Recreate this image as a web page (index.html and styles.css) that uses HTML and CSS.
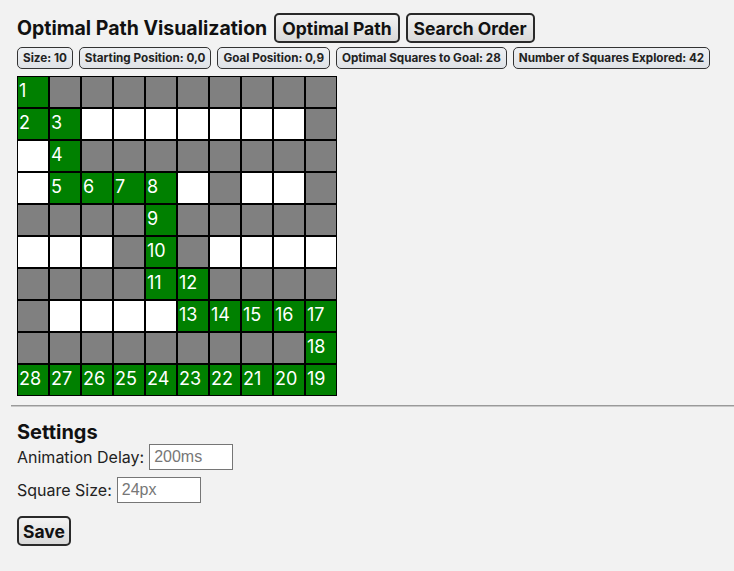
FILE: index.html
```html
<!DOCTYPE html>
<html>
<head>
<meta charset="utf-8">
<link rel="stylesheet" href="styles.css">
</head>
<body>
<div class="page">
  <section class="viz">
    <div class="title-row">
      <h1 class="title">Optimal Path Visualization</h1>
      <button class="btn">Optimal Path</button>
      <button class="btn">Search Order</button>
    </div>
    <div class="badges">
      <span class="badge">Size: 10</span>
      <span class="badge">Starting Position: 0,0</span>
      <span class="badge">Goal Position: 0,9</span>
      <span class="badge">Optimal Squares to Goal: 28</span>
      <span class="badge">Number of Squares Explored: 42</span>
    </div>
    <div class="grid">
      <div class="cell g">1</div><div class="cell d"></div><div class="cell d"></div><div class="cell d"></div><div class="cell d"></div><div class="cell d"></div><div class="cell d"></div><div class="cell d"></div><div class="cell d"></div><div class="cell d"></div>
      <div class="cell g">2</div><div class="cell g">3</div><div class="cell w"></div><div class="cell w"></div><div class="cell w"></div><div class="cell w"></div><div class="cell w"></div><div class="cell w"></div><div class="cell w"></div><div class="cell d"></div>
      <div class="cell w"></div><div class="cell g">4</div><div class="cell d"></div><div class="cell d"></div><div class="cell d"></div><div class="cell d"></div><div class="cell d"></div><div class="cell d"></div><div class="cell d"></div><div class="cell d"></div>
      <div class="cell w"></div><div class="cell g">5</div><div class="cell g">6</div><div class="cell g">7</div><div class="cell g">8</div><div class="cell w"></div><div class="cell d"></div><div class="cell w"></div><div class="cell w"></div><div class="cell d"></div>
      <div class="cell d"></div><div class="cell d"></div><div class="cell d"></div><div class="cell d"></div><div class="cell g">9</div><div class="cell d"></div><div class="cell d"></div><div class="cell d"></div><div class="cell d"></div><div class="cell d"></div>
      <div class="cell w"></div><div class="cell w"></div><div class="cell w"></div><div class="cell d"></div><div class="cell g">10</div><div class="cell d"></div><div class="cell w"></div><div class="cell w"></div><div class="cell w"></div><div class="cell w"></div>
      <div class="cell d"></div><div class="cell d"></div><div class="cell d"></div><div class="cell d"></div><div class="cell g">11</div><div class="cell g">12</div><div class="cell d"></div><div class="cell d"></div><div class="cell d"></div><div class="cell d"></div>
      <div class="cell d"></div><div class="cell w"></div><div class="cell w"></div><div class="cell w"></div><div class="cell w"></div><div class="cell g">13</div><div class="cell g">14</div><div class="cell g">15</div><div class="cell g">16</div><div class="cell g">17</div>
      <div class="cell d"></div><div class="cell d"></div><div class="cell d"></div><div class="cell d"></div><div class="cell d"></div><div class="cell d"></div><div class="cell d"></div><div class="cell d"></div><div class="cell d"></div><div class="cell g">18</div>
      <div class="cell g">28</div><div class="cell g">27</div><div class="cell g">26</div><div class="cell g">25</div><div class="cell g">24</div><div class="cell g">23</div><div class="cell g">22</div><div class="cell g">21</div><div class="cell g">20</div><div class="cell g">19</div>
    </div>
  </section>
  <hr class="divider">
  <section class="settings">
    <h2 class="settings-title">Settings</h2>
    <label class="field">Animation Delay: <input class="input" type="text" placeholder="200ms"></label>
    <label class="field">Square Size: <input class="input" type="text" placeholder="24px"></label>
    <button class="btn save">Save</button>
  </section>
</div>
</body>
</html>
```

FILE: styles.css
```css
html, body {
  margin: 0;
  padding: 0;
  background: #f2f2f2;
}
body {
  font-family: "Inter", "DejaVu Sans", sans-serif;
  color: #111;
}
.page {
  padding: 12px 0 0 11px;
}
.viz {
  padding-left: 6px;
}
.title-row {
  display: flex;
  align-items: center;
  gap: 6px;
  height: 30px;
  margin-top: 1px;
}
.title {
  font-size: 19.5px;
  font-weight: 700;
  margin: 0 1px 0 0;
}
.btn {
  font-family: "Inter", "DejaVu Sans", sans-serif;
  font-size: 17.5px;
  font-weight: 700;
  color: #111;
  height: 30px;
  padding: 0 6px;
  border: 2px solid #2a2a2a;
  border-radius: 5px;
  background: linear-gradient(#f3f3f3, #d9d9d9);
}
.badges {
  display: flex;
  gap: 6px;
  margin-top: 4px;
}
.badge {
  display: flex;
  align-items: center;
  height: 22px;
  box-sizing: border-box;
  padding: 0 5px;
  border: 1px solid #333;
  border-radius: 5px;
  background: linear-gradient(#eef0f3, #dfe2e6);
  font-size: 11.7px;
  font-weight: 700;
  color: #222;
}
.grid {
  display: grid;
  grid-template-columns: repeat(10, 32px);
  grid-auto-rows: 32px;
  margin-top: 7px;
  width: 320px;
}
.cell {
  box-sizing: border-box;
  border: 1px solid #000;
  color: #fff;
  font-size: 18px;
  line-height: 28px;
  padding-left: 1px;
  overflow: hidden;
  white-space: nowrap;
}
.g { background: #008000; }
.d { background: #808080; }
.w { background: #ffffff; }
.divider {
  margin: 9px 0 0 0;
  border: 0;
  border-top: 1px solid #9a9a9a;
  border-bottom: 1px solid #c8c8c8;
  height: 0;
}
.settings {
  padding-left: 6px;
  display: flex;
  flex-direction: column;
  align-items: flex-start;
}
.settings-title {
  font-size: 20px;
  font-weight: 700;
  margin: 13px 0 0 0;
  line-height: 24px;
}
.field {
  font-size: 16px;
  color: #222;
  display: flex;
  align-items: center;
  gap: 5px;
  margin-top: 0;
}
.field + .field {
  margin-top: 7px;
}
.input {
  box-sizing: border-box;
  width: 84px;
  height: 26px;
  border: 1px solid #767676;
  background: #fff;
  font-family: "Liberation Sans", Arial, sans-serif;
  font-size: 16px;
  padding: 0 4px;
}
.input::placeholder {
  color: #777;
}
.save {
  margin-top: 13px;
  padding: 0 4px;
}
```
